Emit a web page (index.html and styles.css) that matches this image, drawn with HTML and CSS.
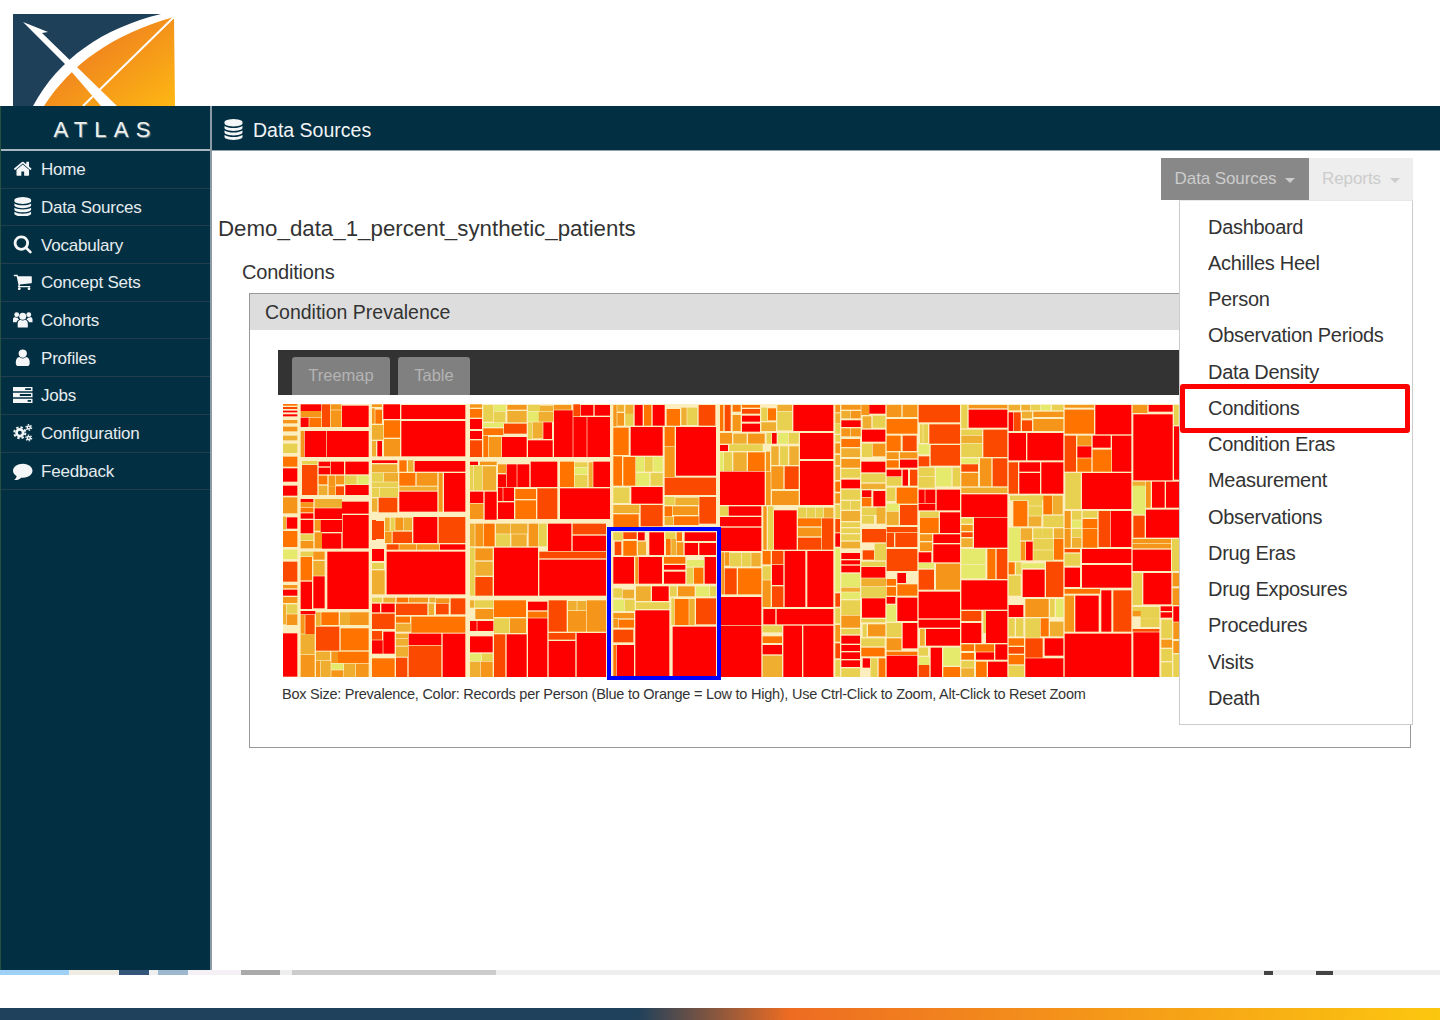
FILE: index.html
```html
<!DOCTYPE html>
<html lang="en">
<head>
    <meta charset="UTF-8">
    <title>ATLAS - Data Sources</title>
    <link rel="stylesheet" href="styles.css">
</head>
<body>
    <svg class="logo" width="162" height="92" viewBox="0 0 162 92">
        <defs>
            <linearGradient id="logoOrange" x1="0.25" y1="0.3" x2="1" y2="1">
                <stop offset="0" stop-color="#ef7f1f"/>
                <stop offset="1" stop-color="#fdb813"/>
            </linearGradient>
        </defs>
        <rect width="162" height="92" fill="#1f4059"/>
        <path d="M148 0 L162 0 L162 92 L20 92 C45 45 90 14 148 0 Z" fill="#fff"/>
        <path d="M161 3 L162 92 L31 92 C58 50 100 20 161 3 Z" fill="url(#logoOrange)"/>
        <path d="M10 8 L35 18 L29 19 L104 92 L88 92 L51 49 Z" fill="#fff"/>
        <path d="M161 3 L70 92" stroke="#fff" stroke-width="2" fill="none"/>
    </svg>

    <div class="app">
        <aside class="sidebar">
            <div class="brand">ATLAS</div>
            <nav>
                <a class="nav-item"><svg class="icon" viewBox="0 0 1792 1792"><path d="M1472 992v480q0 26-19 45t-45 19h-384v-384h-256v384h-384q-26 0-45-19t-19-45v-480q0-1 .5-3t.5-3l575-474 575 474q1 2 1 6zm223-69l-62 74q-8 9-21 11h-3q-13 0-21-7l-692-577-692 577q-12 8-24 7-13-2-21-11l-62-74q-8-10-7-23.5t11-21.5l719-599q32-26 76-26t76 26l244 204v-195q0-14 9-23t23-9h192q14 0 23 9t9 23v408l219 182q10 8 11 21.5t-7 23.5z"/></svg>Home</a>
                <a class="nav-item"><svg class="icon" viewBox="0 0 1792 1792"><path d="M896 768q237 0 443-43t325-127v170q0 69-103 128t-280 93.5-385 34.5-385-34.5-280-93.5-103-128v-170q119 84 325 127t443 43zm0 768q237 0 443-43t325-127v170q0 69-103 128t-280 93.5-385 34.5-385-34.5-280-93.5-103-128v-170q119 84 325 127t443 43zm0-384q237 0 443-43t325-127v170q0 69-103 128t-280 93.5-385 34.5-385-34.5-280-93.5-103-128v-170q119 84 325 127t443 43zm0-1152q208 0 385 34.5t280 93.5 103 128v128q0 69-103 128t-280 93.5-385 34.5-385-34.5-280-93.5-103-128v-128q0-69 103-128t280-93.5 385-34.5z"/></svg>Data Sources</a>
                <a class="nav-item"><svg class="icon" viewBox="0 0 1792 1792"><path d="M1216 832q0-185-131.5-316.5t-316.5-131.5-316.5 131.5-131.5 316.5 131.5 316.5 316.5 131.5 316.5-131.5 131.5-316.5zm512 832q0 52-38 90t-90 38q-54 0-90-38l-343-342q-179 124-399 124-143 0-273.5-55.5t-225-150-150-225-55.5-273.5 55.5-273.5 150-225 225-150 273.5-55.5 273.5 55.5 225 150 150 225 55.5 273.5q0 220-124 399l343 343q37 37 37 90z"/></svg>Vocabulary</a>
                <a class="nav-item"><svg class="icon" viewBox="0 0 1792 1792"><path d="M704 1536q0 52-38 90t-90 38-90-38-38-90 38-90 90-38 90 38 38 90zm896 0q0 52-38 90t-90 38-90-38-38-90 38-90 90-38 90 38 38 90zm128-1088v512q0 24-16.5 42.5t-40.5 21.5l-1044 122q13 60 13 70 0 16-24 64h920q26 0 45 19t19 45-19 45-45 19h-1024q-26 0-45-19t-19-45q0-11 8-31.5t16-36 21.5-40 15.5-29.5l-177-823h-204q-26 0-45-19t-19-45 19-45 45-19h256q16 0 28.5 6.5t19.5 15.5 13 24.5 8 26 5.5 29.5 4.5 26h1201q26 0 45 19t19 45z"/></svg>Concept Sets</a>
                <a class="nav-item"><svg class="icon" viewBox="0 0 20 20"><circle cx="10" cy="6.5" r="3.6"/><circle cx="3.8" cy="4.8" r="2.5"/><circle cx="16.2" cy="4.8" r="2.5"/><path d="M4.8 18v-4.5q0-3 2.6-3.6 2.6 1.6 5.2 0 2.6.6 2.6 3.6V18z"/><path d="M0 12.5v-3q0-2 2-2.3 1.2 1 2.6.6.6 1.4 1.6 2-2.4 1-2.6 2.7zM20 12.5v-3q0-2-2-2.3-1.200 1-2.600.6-.6 1.400-1.600 2 2.400 1 2.600 2.700z"/></svg>Cohorts</a>
                <a class="nav-item"><svg class="icon" viewBox="0 0 1792 1792"><path d="M1536 1399q0 109-62.500 187t-150.500 78h-854q-88 0-150.500-78t-62.500-187q0-85 8.500-160.500t31.500-152 58.500-131 94-89 134.500-34.500q131 128 313 128t313-128q76 0 134.500 34.500t94 89 58.500 131 31.500 152 8.500 160.500zm-256-887q0 159-112.500 271.500t-271.500 112.500-271.500-112.500-112.500-271.500 112.500-271.500 271.500-112.500 271.500 112.500 112.500 271.500z"/></svg>Profiles</a>
                <a class="nav-item"><svg class="icon" viewBox="0 0 20 20"><path d="M0 2h20v4.500H0zM12.500 3.300v1.900h6V3.300zM0 8h20v4.500H0zM7 9.300v1.900h11.500V9.300zM0 14h20v4.500H0zM15 15.300v1.900h3.500v-1.900z" fill-rule="evenodd"/></svg>Jobs</a>
                <a class="nav-item"><svg class="icon" viewBox="0 0 20 20"><circle class="gear" cx="7" cy="10" r="3.400" stroke-width="2.800"/><circle class="gear-teeth" cx="7" cy="10" r="5.700" stroke-width="2"/><circle class="gear" cx="16.200" cy="4.600" r="1.600" stroke-width="1.500"/><circle class="gear-teeth-small" cx="16.200" cy="4.600" r="2.900" stroke-width="1.300"/><circle class="gear" cx="16.200" cy="15.400" r="1.600" stroke-width="1.500"/><circle class="gear-teeth-small" cx="16.200" cy="15.400" r="2.900" stroke-width="1.300"/></svg>Configuration</a>
                <a class="nav-item"><svg class="icon" viewBox="0 0 1792 1792"><path d="M1792 896q0 174-120 321.500t-326 233-450 85.500q-70 0-145-8-198 175-460 242-49 14-114 22-17 2-30.500-9t-17.500-29v-1q-3-4-.5-12t2-10 4.500-9.500l6-9 7-8.500 8-9q7-8 31-34.500t34.500-38 31-39.500 32.500-51 27-59 26-76q-157-89-247.500-220t-90.500-281q0-130 71-248.500t191-204.500 286-136.500 348-50.500q244 0 450 85.500t326 233 120 321.500z"/></svg>Feedback</a>
            </nav>
        </aside>

        <main class="main">
            <header class="page-header">
                <svg class="icon" viewBox="0 0 1792 1792"><path d="M896 768q237 0 443-43t325-127v170q0 69-103 128t-280 93.5-385 34.5-385-34.5-280-93.5-103-128v-170q119 84 325 127t443 43zm0 768q237 0 443-43t325-127v170q0 69-103 128t-280 93.5-385 34.5-385-34.5-280-93.5-103-128v-170q119 84 325 127t443 43zm0-384q237 0 443-43t325-127v170q0 69-103 128t-280 93.5-385 34.5-385-34.5-280-93.5-103-128v-170q119 84 325 127t443 43zm0-1152q208 0 385 34.5t280 93.5 103 128v128q0 69-103 128t-280 93.5-385 34.5-385-34.5-280-93.5-103-128v-128q0-69 103-128t280-93.5 385-34.5z"/></svg>
                Data Sources
            </header>

            <div class="toolbar">
                <div class="btn btn-active">Data Sources<span class="caret"></span></div>
                <div class="btn btn-muted">Reports<span class="caret"></span></div>
                <ul class="dropdown">
                    <li>Dashboard</li>
                    <li>Achilles Heel</li>
                    <li>Person</li>
                    <li>Observation Periods</li>
                    <li>Data Density</li>
                    <li class="marked">Conditions</li>
                    <li>Condition Eras</li>
                    <li>Measurement</li>
                    <li>Observations</li>
                    <li>Drug Eras</li>
                    <li>Drug Exposures</li>
                    <li>Procedures</li>
                    <li>Visits</li>
                    <li>Death</li>
                </ul>
            </div>

            <h2 class="source-name">Demo_data_1_percent_synthetic_patients</h2>
            <h3 class="report-name">Conditions</h3>

            <section class="panel">
                <div class="panel-title">Condition Prevalence</div>
                <div class="panel-body">
                    <div class="tabs">
                        <span class="tab tab-wide">Treemap</span>
                        <span class="tab tab-narrow">Table</span>
                    </div>
                    <div class="treemap">
                        <svg id="treemapSvg" width="896" height="273" viewBox="849 1212 2688 819"></svg>
                        <div class="zoom-box"></div>
                    </div>
                    <p class="caption">Box Size: Prevalence, Color: Records per Person (Blue to Orange = Low to High), Use Ctrl-Click to Zoom, Alt-Click to Reset Zoom</p>
                </div>
            </section>
        </main>
    </div>

    <div class="taskbar">
        <i class="seg seg-a"></i><i class="seg seg-b"></i><i class="seg seg-c"></i><i class="seg seg-d"></i><i class="seg seg-e"></i><i class="seg seg-f"></i><i class="seg seg-g"></i><i class="seg seg-h"></i>
        <i class="tray tray-a"></i><i class="tray tray-b"></i>
    </div>
    <div class="footer-bar"></div>

    <script src="script.js"></script>
</body>
</html>
```

FILE: styles.css
```css
* {
    box-sizing: border-box;
}

body {
    margin: 0;
    height: 1020px;
    overflow: hidden;
    background-color: #fff;
    font-family: "Liberation Sans", Arial, sans-serif;
    color: #333;
}

.logo {
    display: block;
    margin: 14px 0 0 13px;
}

.app {
    display: flex;
    height: 864px;
}

/* sidebar */
.sidebar {
    width: 212px;
    flex: none;
    background-color: #022f42;
    border-left: 1px solid #26503f;
    border-right: 2px solid #8a9ba6;
}

.brand {
    height: 45px;
    padding-top: 11px;
    border-bottom: 2px solid #a9b6bf;
    color: #eef0ee;
    font-size: 22px;
    line-height: 26px;
    letter-spacing: 7.2px;
    text-align: center;
    text-shadow: 1px 1px 1px #7d8a8c;
}

.nav-item {
    display: flex;
    align-items: center;
    height: 37.7px;
    padding: 2px 0 0 12px;
    border-bottom: 1px solid #243d4e;
    color: #e6ecef;
    font-size: 17px;
    letter-spacing: -0.2px;
}

.nav-item .icon {
    width: 19.5px;
    height: 19.5px;
    margin-top: -3px;
    margin-right: 8.5px;
}

.icon {
    width: 21px;
    height: 21px;
    margin-right: 8px;
    flex: none;
    fill: #f4f6f7;
}

.gear {
    fill: none;
    stroke: #f4f6f7;
}

.gear-teeth {
    fill: none;
    stroke: #f4f6f7;
    stroke-dasharray: 2.470 2.000;
}

.gear-teeth-small {
    fill: none;
    stroke: #f4f6f7;
    stroke-dasharray: 1.500 1.540;
}

/* main area */
.main {
    flex: 1;
    min-width: 0;
}

.page-header {
    display: flex;
    align-items: center;
    height: 45px;
    padding: 5px 0 0 11px;
    background-color: #022f42;
    border-bottom: 1px solid #8ea1ad;
    color: #f2f4f5;
    font-size: 19.5px;
}

.page-header .icon {
    margin-top: -2px;
    margin-right: 9px;
}

.toolbar {
    position: relative;
    display: flex;
    justify-content: flex-end;
    height: 42px;
    margin: 7px 27px 0 0;
    font-size: 17px;
}

.btn {
    display: flex;
    align-items: center;
    justify-content: center;
    letter-spacing: -0.1px;
}

.btn-active {
    width: 148px;
    background-color: #888;
    color: #ccc;
}

.btn-muted {
    width: 104px;
    background-color: #eee;
    color: #ccc;
}

.caret {
    width: 0;
    height: 0;
    margin-left: 9px;
    margin-top: 3px;
    border-left: 5px solid transparent;
    border-right: 5px solid transparent;
    border-top: 5px solid #ccc;
}

.dropdown {
    position: absolute;
    top: 42px;
    right: 0;
    z-index: 2;
    width: 234px;
    margin: 0;
    padding: 7.5px 0 7.5px;
    list-style: none;
    background-color: #fff;
    border: 1px solid #ccc;
    border-top-color: #e8e8e8;
    font-size: 20px;
    letter-spacing: -0.3px;
}

.dropdown li {
    position: relative;
    height: 36.27px;
    padding-left: 28px;
    line-height: 36px;
}

.marked::after {
    content: "";
    position: absolute;
    top: -6px;
    right: 2px;
    bottom: -7px;
    left: 0;
    border: 5px solid #f00;
    border-radius: 3px;
}

.source-name {
    margin: 13px 0 0 6px;
    font-size: 22.3px;
    font-weight: normal;
    line-height: 32px;
}

.report-name {
    margin: 15px 0 0 30px;
    font-size: 20px;
    font-weight: normal;
    line-height: 24px;
    letter-spacing: -0.2px;
}

.panel {
    height: 455px;
    margin: 9px 29px 0 37px;
    border: 1px solid #999;
}

.panel-title {
    height: 36px;
    padding-left: 15px;
    background-color: #ddd;
    font-size: 19.5px;
    line-height: 36px;
}

.panel-body {
    padding: 20px 28px 0;
}

.tabs {
    display: flex;
    gap: 8px;
    height: 45px;
    padding: 7px 0 0 14px;
    background-color: #333;
}

.tab {
    height: 38px;
    padding-top: 9px;
    background-color: #808080;
    border-radius: 3px 3px 0 0;
    color: #b4b4b4;
    font-size: 16.5px;
    text-align: center;
}

.tab-wide {
    width: 98px;
}

.tab-narrow {
    width: 72px;
}

.treemap {
    position: relative;
    width: 896px;
    height: 273px;
    margin: 9px 0 0 5px;
}

.treemap svg {
    display: block;
    background-color: #fdeec0;
}

.zoom-box {
    position: absolute;
    top: 123px;
    left: 324px;
    width: 114px;
    height: 153px;
    border: 4px solid #00f;
}

.caption {
    margin: 7px 0 0 4px;
    font-size: 14.5px;
    line-height: 20px;
    white-space: nowrap;
    letter-spacing: -0.25px;
}

/* strip of the screenshot's desktop along the bottom */
.taskbar {
    position: relative;
    display: flex;
    height: 5px;
    background-color: #eee;
}

.seg {
    display: block;
    height: 5px;
}

.seg-a { width: 69px; background-color: #9fd0f5; }
.seg-b { width: 50px; background-color: #f0ece4; }
.seg-c { width: 30px; background-color: #34567a; }
.seg-d { width: 9px; background-color: #eee; }
.seg-e { width: 30px; background-color: #9db8cc; }
.seg-f { width: 53px; background-color: #f5f0f5; }
.seg-g { width: 39px; background-color: #aaa; margin-right: 12px; }
.seg-h { width: 204px; background-color: #ccc; }

.tray {
    position: absolute;
    top: 1px;
    height: 4px;
    background-color: #444;
}

.tray-a { left: 1264px; width: 9px; }
.tray-b { left: 1316px; width: 17px; }

.footer-bar {
    height: 12px;
    margin-top: 33px;
    background: linear-gradient(90deg, #20415b 0, #20415b 638px, #ee6c22 790px, #fcc70f 100%);
}
```

FILE: script.js
```js
// treemap cells, "x y w h colour" in 3x pixels, two parts of the chart
const colours = ['#ff0000', '#fb4a00', '#ff7400', '#f5961a', '#efae30', '#e8d050', '#e6ea6c'];

const leftCells = `
38 176 44 6 2;38 186 44 6 1;38 197 44 5 0;38 208 44 6 0;38 225 44 10 3;38 245 44 14 3;38 272 44 14 4;38 296 44 28 5;38 335 44 30 2;38 370 44 40 0;38 422 44 30 0;38 457 44 48 3;38 515 10 38 4;50 517 32 34 0;38 558 44 48 2;38 614 44 28 6;38 650 44 60 1;38 720 44 10 3;38 734 44 18 0;38 756 44 18 3;38 778 10 60 4;50 778 32 28 5;50 808 32 32 3;38 865 44 130 0;
92 178 62 20 0;92 198 62 18 3;92 218 24 28 0;118 218 36 28 2;156 178 24 68 1;182 178 32 16 3;182 196 32 50 3;216 182 80 64 0;92 258 10 78 3;104 258 64 78 0;170 258 126 78 0;
96 348 46 10 5;96 360 46 90 1;146 350 34 14 0;146 368 34 20 0;182 350 40 38 0;226 350 70 38 0;146 392 26 26 2;176 392 20 32 3;198 392 24 26 3;224 392 36 26 5;262 392 34 26 6;146 422 26 28 4;176 424 20 26 3;198 424 24 26 1;226 420 70 30 0;
92 462 38 10 0;92 472 38 14 3;92 488 38 14 2;92 505 38 16 0;134 462 82 26 4;134 490 82 32 0;216 470 80 36 0;92 525 38 40 0;92 568 38 18 5;92 588 38 22 3;134 525 18 32 3;152 525 64 36 0;134 562 22 48 3;156 565 58 46 0;218 510 78 100 0;
92 620 38 14 5;92 636 34 70 2;130 620 34 24 3;130 648 34 44 4;130 694 34 96 0;92 710 34 82 0;172 620 124 172 0;
92 798 44 10 0;92 810 12 56 3;106 810 28 58 1;138 802 14 40 4;154 802 52 38 2;210 802 30 38 4;240 802 56 38 3;92 868 42 60 4;92 930 42 66 3;138 845 70 72 1;212 850 84 66 2;138 920 42 26 4;184 920 20 34 3;204 920 92 34 2;138 948 12 48 3;152 948 30 48 4;184 956 36 18 6;222 956 34 40 4;258 956 38 40 3;184 976 36 20 3;
306 178 30 8 3;306 190 8 46 3;316 194 20 42 2;340 178 50 44 0;342 226 48 52 2;306 240 34 44 4;306 288 12 46 4;322 288 14 46 0;342 282 48 52 3;394 180 192 42 0;394 228 192 106 0;
306 346 76 8 0;306 358 76 24 4;388 346 22 34 2;414 346 16 34 4;434 348 152 32 0;306 384 34 26 5;342 384 42 26 4;306 412 78 14 5;306 428 22 28 5;330 428 54 28 5;306 460 16 40 4;326 458 56 44 1;388 384 48 38 2;440 384 62 38 3;388 425 114 12 4;388 440 114 60 0;506 384 12 116 3;522 384 64 116 0;
306 525 12 60 1;318 528 24 54 1;345 518 14 40 4;362 518 12 40 5;376 518 24 38 3;402 518 24 38 4;430 516 72 78 0;506 516 80 78 1;368 560 58 34 1;345 560 20 34 3;350 598 36 16 1;388 598 50 16 3;440 598 68 16 3;510 598 76 16 0;306 612 36 36 0;306 654 36 18 5;306 676 38 72 4;350 620 236 128 0;
306 758 30 14 5;340 758 36 14 4;380 758 34 14 2;416 758 58 14 3;478 758 18 14 4;498 760 40 14 3;542 760 44 48 1;306 776 24 26 0;334 776 40 26 0;378 776 94 34 1;476 776 16 34 4;498 776 38 32 1;306 806 68 46 1;306 858 30 26 1;306 886 32 40 0;340 860 34 66 0;378 815 42 18 2;378 836 44 24 4;424 815 162 48 2;378 866 36 14 4;378 882 36 20 4;378 905 36 30 4;416 866 98 34 0;518 866 68 130 0;416 902 98 94 1;306 940 68 56 2;378 938 34 58 1;
600 178 36 10 3;600 192 36 26 2;600 222 36 30 0;600 258 36 24 0;600 286 36 50 1;640 180 30 50 5;672 200 34 32 5;672 180 36 18 6;712 180 58 14 3;712 198 58 34 4;774 180 36 18 5;774 200 32 30 6;810 182 40 16 4;806 200 44 30 4;640 234 60 12 6;640 250 60 20 2;702 236 68 30 1;640 272 14 64 2;656 276 38 60 3;696 276 74 60 0;774 232 12 50 5;788 232 30 48 4;820 232 26 50 0;774 286 74 50 0;852 196 56 140 0;852 180 52 14 3;910 178 20 36 1;932 180 38 32 0;974 180 46 32 0;910 216 40 120 0;952 216 68 120 0;
600 350 24 10 0;630 350 50 10 3;600 362 10 74 5;612 362 24 74 5;638 364 40 72 4;684 358 24 26 3;710 358 30 68 0;742 358 36 68 0;782 350 80 76 0;684 388 24 38 0;600 440 40 34 0;644 440 36 84 0;600 476 40 46 3;684 428 14 40 0;700 428 32 40 0;684 472 48 50 0;736 432 62 30 2;736 466 62 56 2;802 430 60 92 1;870 350 42 76 2;914 352 38 14 5;914 368 38 20 6;914 390 38 36 5;956 352 12 74 4;970 350 50 76 0;870 430 150 92 0;
600 536 14 68 4;616 536 24 68 3;642 536 32 68 2;678 536 42 30 4;678 568 42 36 5;722 536 50 30 4;724 568 46 36 4;776 536 28 68 3;806 536 24 68 5;834 536 70 82 0;908 536 100 32 1;908 572 100 46 0;600 608 14 144 5;616 610 52 36 3;616 650 52 42 4;616 696 52 56 1;672 608 132 144 0;808 620 200 20 1;808 644 200 108 0;
600 766 12 22 4;614 766 56 22 5;616 792 54 30 3;600 828 20 30 0;622 828 48 30 0;672 766 96 50 2;672 820 46 44 5;720 820 48 44 3;600 874 68 48 0;600 926 34 22 6;636 926 32 22 5;600 950 30 46 4;632 950 36 46 3;672 868 34 128 1;710 868 60 128 0;774 770 58 26 0;774 800 58 18 2;774 820 58 176 0;836 766 54 94 1;894 768 26 28 4;922 768 26 28 4;894 798 54 62 3;950 766 58 94 3;836 864 80 20 1;836 888 80 108 0;920 864 88 132 0;
1030 180 10 64 3;1042 180 20 20 4;1042 204 20 38 3;1066 180 24 28 4;1066 206 24 36 5;1094 180 24 62 0;1122 180 22 62 2;1148 180 36 62 0;1190 192 40 50 2;1234 188 16 52 4;1252 188 30 52 5;1286 180 50 62 1;1030 248 46 82 2;1082 246 96 86 0;1184 246 30 58 2;1184 306 30 90 3;1218 246 120 146 0;1030 334 26 88 2;1060 336 36 86 2;1098 336 24 44 6;1124 336 24 44 5;1150 336 28 44 6;1098 384 40 38 6;1142 384 36 38 5;1184 398 154 52 1;1030 428 48 46 5;1084 426 94 50 0;1030 480 78 24 4;1030 508 76 38 2;1112 480 66 64 1;1184 456 30 24 5;1216 458 70 22 4;1288 456 50 80 1;1184 484 22 30 2;1208 484 76 26 3;1184 516 26 24 4;1212 514 74 26 2;
1030 562 28 24 5;1060 562 40 20 1;1104 562 20 24 0;1138 562 44 68 0;1186 562 30 20 5;1220 562 16 26 2;1244 562 94 26 0;1034 590 20 40 1;1060 588 40 44 2;1104 590 24 40 4;1188 582 14 48 2;1204 582 14 48 4;1220 592 20 38 3;1244 594 40 36 0;1288 594 50 36 0;1030 636 62 80 0;1096 636 8 80 3;1106 636 70 80 0;1182 636 64 20 2;1182 660 64 14 0;1182 680 64 36 0;1250 645 52 20 6;1250 668 20 48 5;1272 668 28 48 2;1304 636 34 80 0;
1030 730 26 28 5;1058 734 34 26 4;1098 724 44 44 4;1146 724 50 44 0;1200 724 20 30 5;1224 724 50 30 3;1278 724 40 30 6;1320 724 18 30 5;1030 764 32 34 6;1064 764 30 34 5;1098 772 100 20 5;1030 804 62 16 3;1030 822 14 26 3;1046 824 46 24 2;1030 854 60 38 1;1040 900 52 96 0;1096 796 102 200 0;1204 760 8 80 5;1214 762 42 78 2;1258 762 16 78 4;1278 760 60 78 1;1208 845 130 150 0;1030 900 8 96 2`;

const rightCells = `
0 180 10 78 2;14 180 18 78 1;38 180 24 20 2;38 210 24 48 3;66 180 54 8 2;66 192 54 14 1;66 212 54 18 0;66 236 54 24 0;124 188 18 40 5;144 190 24 36 2;124 232 44 26 4;172 180 44 18 4;172 200 44 56 5;220 180 120 78 0;
0 264 36 32 3;40 266 40 30 4;84 266 50 30 3;140 264 14 32 5;156 264 14 32 0;174 264 30 32 6;206 264 30 32 5;240 264 100 78 0;0 300 24 18 0;28 298 100 20 5;0 322 10 56 6;12 322 24 56 5;40 322 40 56 4;84 322 50 56 2;138 320 12 58 3;154 304 22 56 4;180 304 24 56 5;208 304 28 56 4;
0 380 134 100 0;138 380 14 100 3;154 364 36 68 3;194 364 42 68 1;156 438 80 42 3;240 348 100 132 0;0 484 24 28 5;26 484 98 28 0;0 516 124 28 0;0 548 124 70 0;130 484 10 130 3;144 484 16 130 5;162 496 68 118 0;234 488 24 30 5;260 488 26 30 5;288 488 22 30 5;312 488 28 30 4;234 520 70 24 2;234 548 70 26 3;234 578 70 36 1;306 520 34 94 1;
4 622 8 126 3;14 622 14 40 3;30 624 34 40 5;66 624 26 40 5;94 624 28 40 4;128 618 24 40 2;156 618 34 40 1;14 670 36 78 1;54 670 70 78 2;128 664 24 40 5;128 706 24 80 3;156 660 34 60 0;156 724 34 62 1;194 618 62 168 0;262 618 78 168 0;0 756 124 84 0;130 792 36 46 0;170 792 170 46 0;0 842 124 154 0;128 842 58 20 5;128 874 58 20 2;128 900 58 28 0;128 932 58 64 4;190 842 56 154 0;250 842 90 154 0;
346 180 14 22 3;346 205 14 30 4;346 236 14 30 5;346 270 14 20 5;346 295 14 30 3;346 330 14 30 4;346 365 14 40 4;346 410 14 30 2;346 445 14 30 3;346 480 14 40 5;346 522 14 40 1;346 565 14 40 0;346 610 14 130 6;346 745 14 40 1;346 790 14 45 5;346 840 14 50 3;346 895 14 45 1;346 945 14 50 5;
364 180 58 14 3;364 198 26 22 4;392 198 30 22 3;364 226 58 20 0;364 250 26 24 3;392 250 30 24 3;364 282 56 24 2;364 310 56 26 4;364 342 56 26 3;364 372 56 26 5;364 404 56 26 0;364 434 56 30 5;364 468 26 26 5;392 468 28 26 5;364 498 56 30 4;364 532 56 14 5;364 550 56 14 5;364 568 56 18 5;364 590 56 20 4;364 624 56 18 0;364 646 56 12 0;364 662 56 20 0;364 686 56 40 6;364 728 56 12 4;364 742 56 20 6;364 766 56 44 5;364 812 56 36 3;364 852 56 16 5;364 872 56 24 0;364 900 56 18 0;364 922 56 20 0;364 946 56 20 0;364 970 56 26 5;
424 180 24 30 3;448 180 48 26 0;428 214 26 36 4;458 212 38 36 5;426 254 70 36 0;426 296 30 40 5;458 296 38 38 3;424 350 72 32 0;424 386 72 26 5;424 416 72 16 4;426 436 28 20 0;426 458 28 26 2;460 438 36 46 0;426 488 70 22 5;426 512 36 24 5;470 488 26 48 4;426 552 72 40 1;428 616 34 28 1;464 596 34 50 5;424 650 72 14 5;424 666 72 32 0;424 700 74 24 4;424 726 74 32 5;426 760 70 58 0;424 822 72 10 5;428 838 12 38 5;444 838 52 36 3;424 880 70 24 5;424 908 70 26 2;428 940 22 28 0;452 940 20 56 5;476 940 20 56 2;
500 180 44 36 3;548 180 44 36 3;500 222 92 44 2;500 272 42 46 2;548 272 42 46 1;500 322 36 20 3;540 322 52 18 3;500 346 36 22 2;540 344 52 24 0;500 374 44 20 0;548 374 16 48 0;570 374 22 48 1;500 396 44 26 5;530 428 62 48 2;500 428 26 40 5;500 476 36 22 6;500 500 36 40 4;540 480 52 60 1;500 546 92 16 1;500 564 22 42 1;526 564 66 42 1;500 612 92 66 1;532 684 26 30 0;500 702 28 20 2;500 726 28 26 2;532 718 60 34 2;500 756 26 20 0;500 780 28 50 6;532 758 60 70 0;500 834 44 42 5;548 834 44 76 0;500 880 44 36 3;500 920 92 10 2;500 932 92 64 0;
596 180 124 52 1;600 238 8 56 5;610 238 14 56 5;628 238 92 58 1;596 298 32 30 6;632 300 88 62 1;596 334 32 30 1;596 368 48 26 5;596 396 48 32 5;648 368 46 56 6;698 368 22 56 5;596 434 18 40 0;616 434 30 40 0;650 434 70 62 0;596 476 50 20 0;600 500 56 16 5;600 518 56 46 2;660 502 60 62 0;600 568 36 20 3;600 592 36 26 3;640 568 80 26 0;640 598 80 54 0;596 622 38 30 0;596 654 46 16 6;596 674 46 60 1;648 656 72 78 3;596 740 124 80 0;596 824 124 24 0;600 852 14 50 4;618 852 102 50 0;596 908 28 24 5;596 936 32 24 6;596 960 32 36 1;632 908 34 88 0;670 908 50 54 6;670 966 50 30 2;
724 180 18 70 5;746 180 116 10 3;746 194 116 54 0;724 254 62 16 5;724 272 62 22 4;724 296 62 40 5;790 254 72 82 1;724 340 52 16 6;724 358 50 22 1;724 384 50 40 3;780 340 34 84 3;818 340 44 84 1;724 428 138 16 4;724 448 138 68 0;724 520 34 16 5;724 540 34 18 3;724 562 34 14 1;724 580 34 26 4;762 518 100 90 0;724 612 72 46 6;724 660 72 40 6;802 612 24 90 2;830 612 32 90 1;724 706 138 88 0;724 798 60 30 1;790 798 8 66 5;798 798 64 96 0;724 834 60 60 0;724 898 38 20 2;766 898 56 22 2;724 924 38 20 2;768 922 54 22 0;826 898 36 46 0;724 948 38 20 5;724 970 38 26 4;768 950 32 46 2;804 950 58 46 0;
866 180 34 16 4;904 180 26 16 4;932 180 28 16 5;962 180 30 16 6;996 180 34 16 5;866 202 14 56 0;882 202 20 56 1;906 200 30 20 4;906 226 30 32 1;940 200 90 16 3;940 222 90 36 3;866 264 52 82 0;922 264 108 82 0;866 352 28 94 1;898 352 62 28 0;898 384 62 62 0;964 352 66 94 0;870 452 100 14 5;880 468 42 76 2;926 452 40 30 5;926 484 40 28 5;926 514 38 30 4;970 452 26 56 2;998 452 30 56 4;970 512 60 34 5;866 548 34 100 6;902 550 34 36 4;940 550 28 30 5;968 550 30 30 5;1002 550 28 30 4;902 590 14 56 3;918 590 20 56 0;940 582 60 32 5;940 616 60 30 5;1002 582 28 62 2;866 652 18 36 2;888 652 16 36 5;906 655 68 14 6;866 692 36 60 5;908 674 66 82 0;978 650 52 106 1;866 780 44 36 0;866 820 18 54 5;888 820 22 54 5;916 762 70 54 3;990 762 14 54 5;1008 762 22 54 6;916 820 44 58 5;962 820 24 54 2;990 830 40 44 4;916 880 52 58 1;974 880 56 52 0;916 940 114 56 0;866 880 46 22 2;866 906 46 20 1;866 930 46 28 2;866 962 46 34 5;
1034 180 88 8 3;1034 194 88 72 2;1126 180 108 88 0;1034 272 34 108 1;1072 272 42 30 3;1118 272 54 36 0;1072 304 42 34 0;1072 340 42 40 2;1118 314 56 66 2;1176 272 58 108 0;1036 384 46 108 5;1086 384 148 108 0;1034 498 18 52 3;1056 498 28 26 5;1056 526 28 22 6;1088 498 44 20 5;1088 522 44 28 2;1034 552 18 56 3;1056 552 28 24 5;1056 578 28 30 4;1088 552 44 56 2;1136 498 34 108 1;1172 498 62 108 0;1034 612 46 10 1;1034 626 46 36 5;1034 668 46 58 0;1086 612 148 42 0;1086 660 148 68 0;1034 732 106 14 2;1034 752 28 108 3;1066 752 70 108 0;1144 736 30 124 0;1180 736 54 124 1;1034 866 200 130 0;
1238 180 44 24 3;1286 180 72 20 0;1362 180 14 60 5;1240 208 118 198 0;1362 244 16 160 0;1238 410 38 14 4;1238 422 38 86 6;1278 410 14 78 3;1296 410 38 78 0;1338 410 40 78 0;1240 512 34 66 1;1278 494 100 84 0;1238 582 115 12 3;1238 596 115 14 3;1238 614 115 64 0;1356 582 22 96 5;1238 684 28 96 5;1270 684 84 94 0;1358 684 20 40 3;1358 730 20 50 3;1238 786 80 12 5;1238 798 26 16 3;1262 798 56 22 5;1262 820 56 26 5;1322 784 34 14 0;1322 802 34 16 0;1360 784 18 46 0;1324 824 32 56 5;1360 832 18 50 3;1238 852 80 8 1;1240 862 78 134 0;1324 884 32 24 3;1324 912 32 36 5;1324 952 32 44 5;1360 888 18 36 3;1360 928 18 68 5`;

function drawCells(svg, data, offsetX) {
  data.split(';').forEach(cell => {
    const [x, y, w, h, c] = cell.trim().split(' ').map(Number);
    const rect = document.createElementNS('http://www.w3.org/2000/svg', 'rect');
    rect.setAttribute('x', x + offsetX);
    rect.setAttribute('y', y + 1035);
    rect.setAttribute('width', w);
    rect.setAttribute('height', h);
    rect.setAttribute('fill', colours[c]);
    svg.appendChild(rect);
  });
}

// Init
const svg = document.getElementById('treemapSvg');
drawCells(svg, leftCells, 810);
drawCells(svg, rightCells, 2160);
```
